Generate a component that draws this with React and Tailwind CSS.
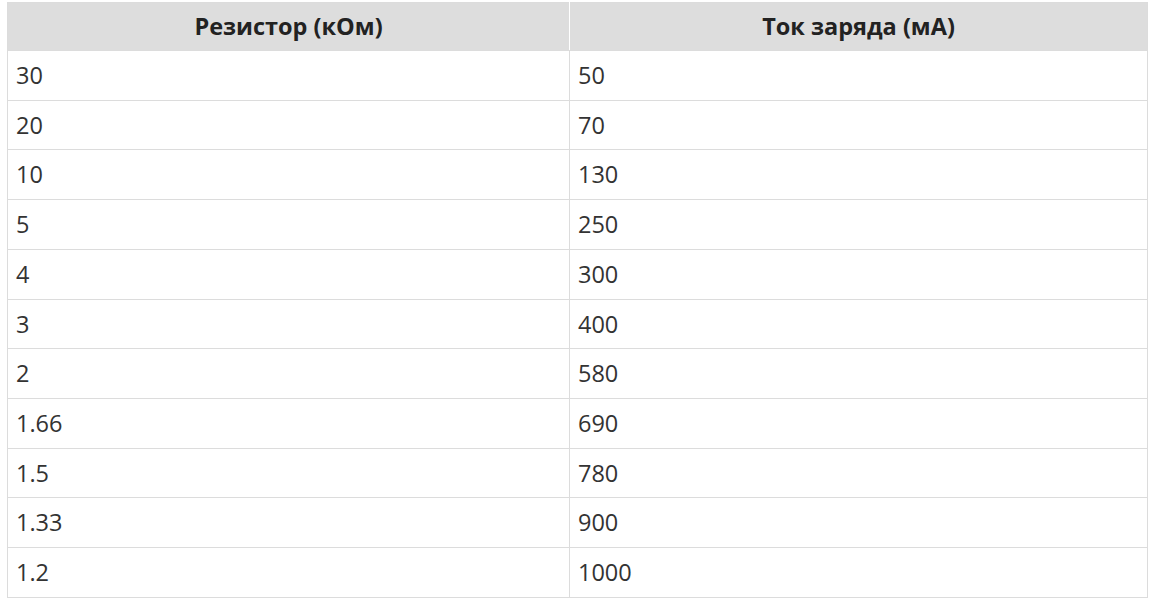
import React from 'react';

const rows = [
  ['30', '50'],
  ['20', '70'],
  ['10', '130'],
  ['5', '250'],
  ['4', '300'],
  ['3', '400'],
  ['2', '580'],
  ['1.66', '690'],
  ['1.5', '780'],
  ['1.33', '900'],
  ['1.2', '1000'],
];

export default function App() {
  return (
    <div className="bg-white min-h-[605px] pt-[2px] pl-[7px] font-['Open_Sans',sans-serif] text-[23.5px] text-[#333]">
      <table className="w-[1140px] table-fixed border-collapse border border-[#dcdcdc]">
        <colgroup>
          <col className="w-[562px]" />
          <col className="w-[578px]" />
        </colgroup>
        <thead>
          <tr className="bg-[#dddddd] text-[#222]">
            <th className="border border-[#dcdcdc] border-r-white px-2 py-[7px] leading-[33px] font-bold text-center">Резистор (кОм)</th>
            <th className="border border-[#dcdcdc] px-2 py-[7px] leading-[33px] font-bold text-center">Ток заряда (мА)</th>
          </tr>
        </thead>
        <tbody>
          {rows.map(([r, i]) => (
            <tr key={r}>
              <td className="border border-[#dcdcdc] px-2 py-2 leading-[32.7px]">{r}</td>
              <td className="border border-[#dcdcdc] px-2 py-2 leading-[32.7px]">{i}</td>
            </tr>
          ))}
        </tbody>
      </table>
    </div>
  );
}
